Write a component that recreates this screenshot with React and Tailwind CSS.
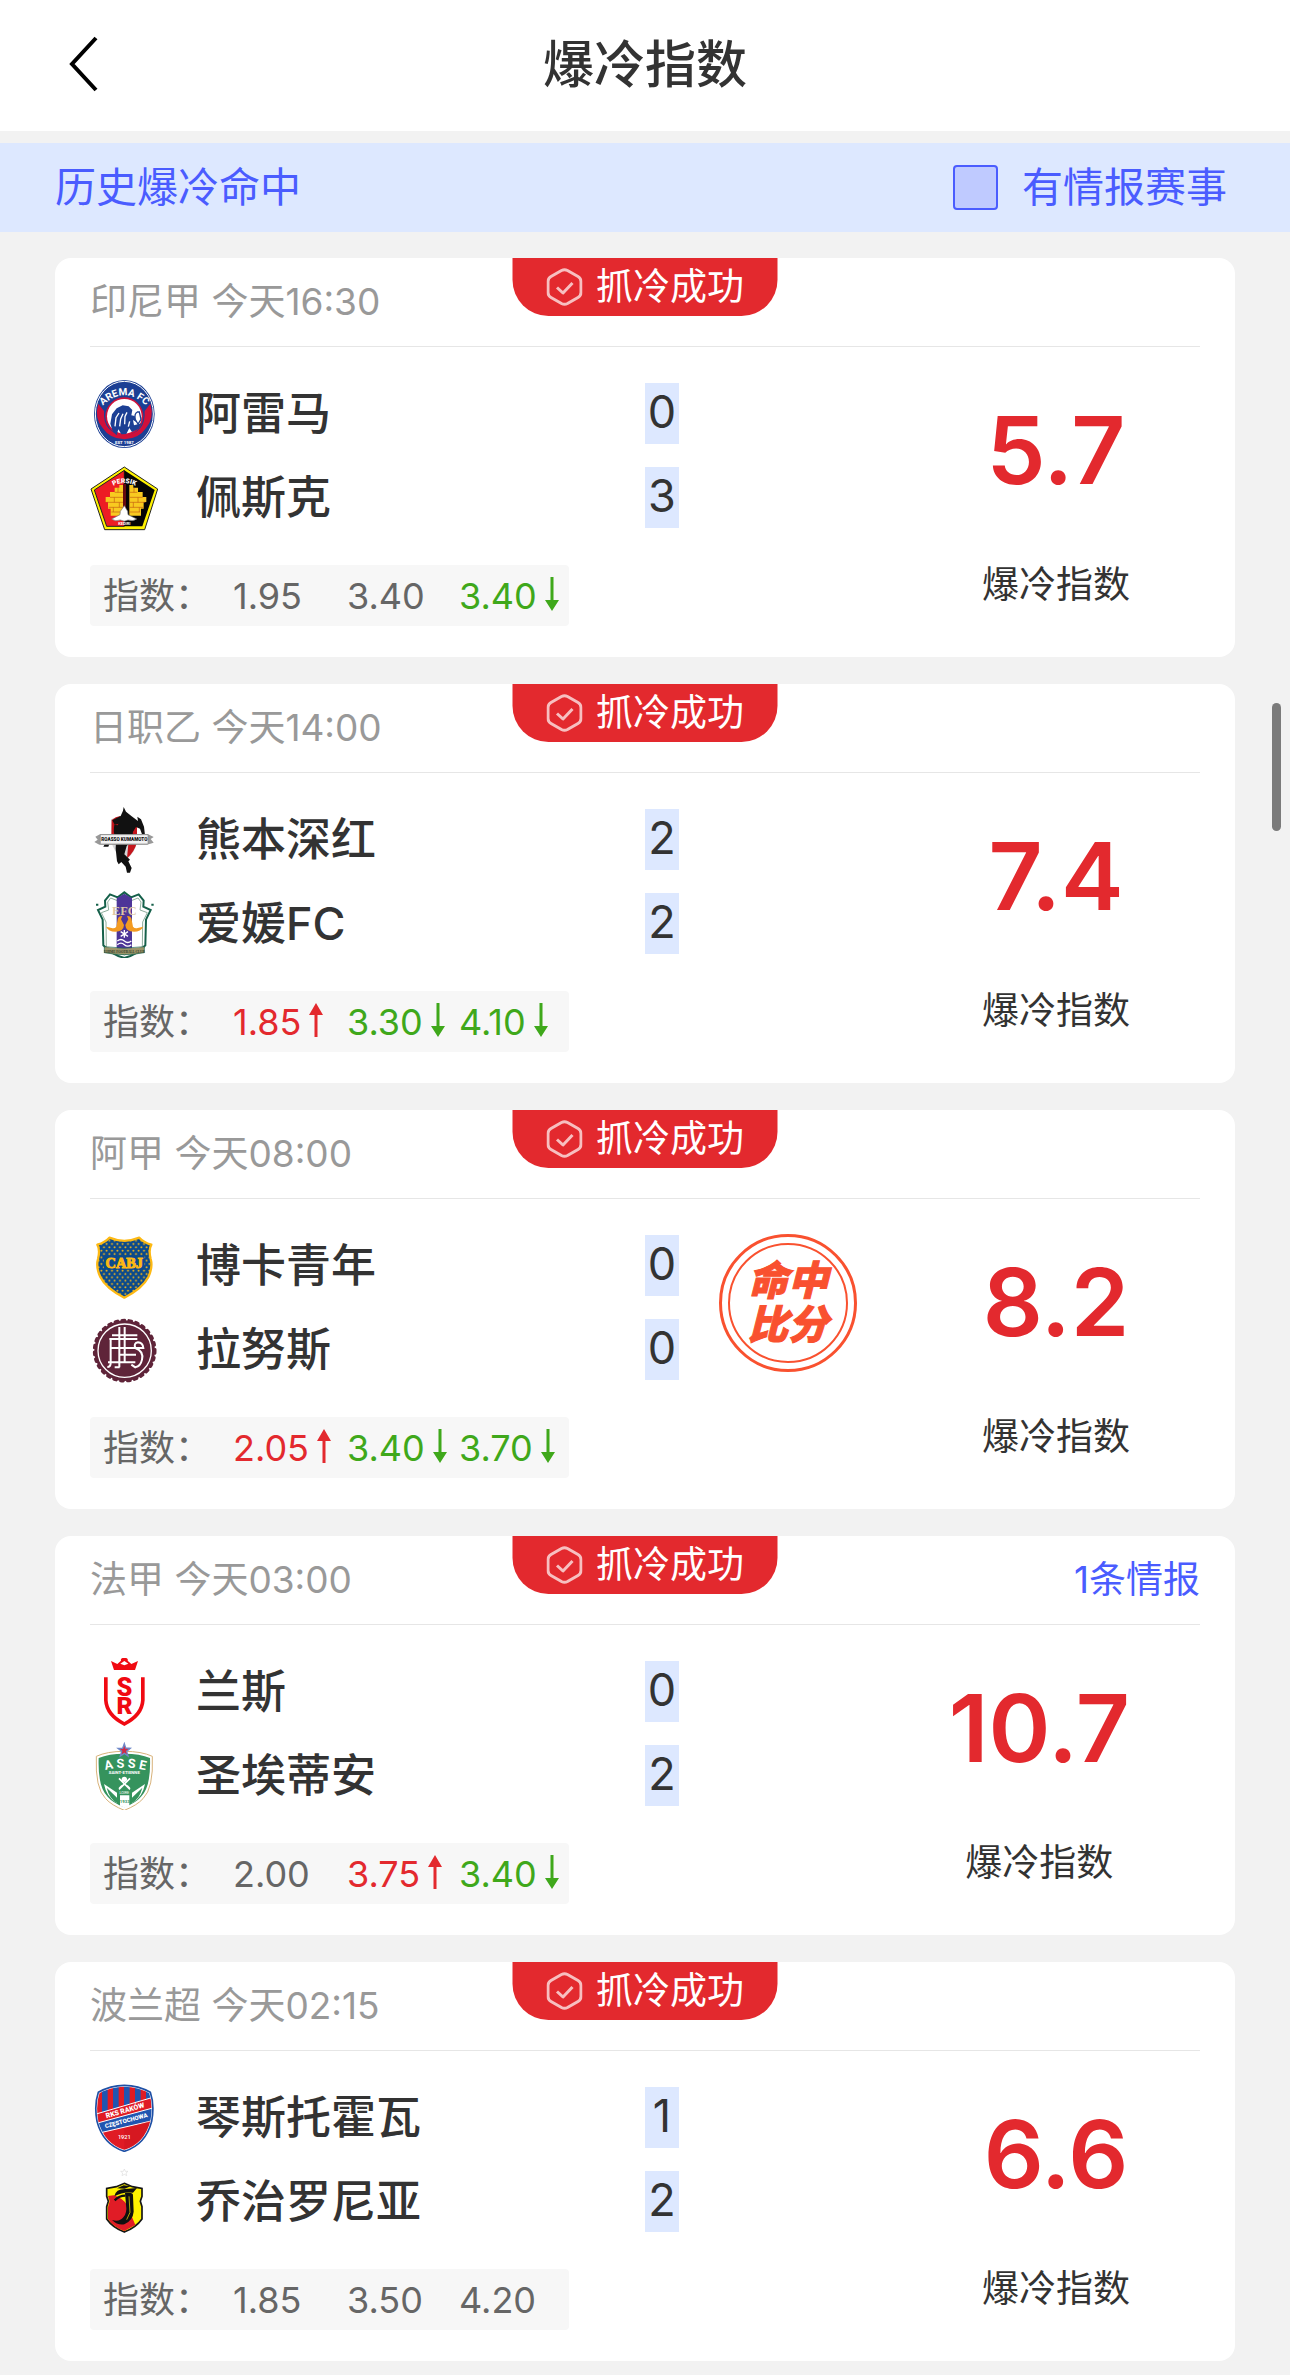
import React, { useState } from 'react';

const AremaLogo = () => (
  <svg viewBox="30 33 204 204" className="size-[68px]" aria-hidden="true">
    <ellipse cx="133" cy="135" rx="91" ry="102" fill="#1c3f94" />
    <ellipse cx="133" cy="135" rx="87" ry="98" fill="none" stroke="#fff" strokeWidth="3" />
    <path d="M55 104q-13 42 13 73q22 33 65 34q43-1 65-34q26-31 13-73l-17 22q4 67-61 72q-65-5-61-72z" fill="#d0103a" />
    <circle cx="133" cy="142" r="57" fill="#d0103a" />
    <circle cx="133" cy="142" r="52" fill="#fff" />
    <path d="M99 189l-8-25 5-28 14-18 18-9 18 3 11 11-3 16 10 2 5 18-10-6 3 16 22-6-8 16-20 10-8-12-9 18-15 1-9-15-5 18z" fill="#1c3f94" />
    <path d="M105 172l3-26 9-14M119 172l3-22 7-16M134 166l1-24 6-12M149 157l-4 16" fill="none" stroke="#fff" strokeWidth="4" />
    <path d="M172 129q-10 5-6 23l8 13 9-14-5-22z" fill="#fff" stroke="#1c3f94" strokeWidth="4" />
    <path id="arema-arc" d="M60 118Q133 40 206 118" fill="none" />
    <text fill="#fff" fontFamily="Roboto" fontWeight="700" fontSize="30">
      <textPath href="#arema-arc" startOffset="50%" textAnchor="middle">AREMA FC</textPath>
    </text>
    <text x="133" y="225" textAnchor="middle" fill="#fff" fontFamily="Roboto" fontWeight="700" fontSize="13">EST 1987</text>
  </svg>
);

const PersikLogo = () => (
  <svg viewBox="30 285 204 204" className="size-[68px]" aria-hidden="true">
    <path d="M133 294l100 66-39 122H74L33 360z" fill="#fff200" stroke="#222" strokeWidth="3" />
    <path d="M133 304v168H80L43 363z" fill="#ed1c24" stroke="#222" strokeWidth="3" />
    <path d="M133 304v168h54l37-109z" fill="#050505" />
    <path d="M118 348h12v92H92v-21h-8v-20h-7v-15h13v-15h14v-13h14zM148 348h12v8h14v13h14v15h11v15h-8v20h-8v21h-35z" fill="#f8ca20" />
    <path d="M104 370h26M90 385h40M78 400h52M86 415h44M94 429h36M148 370h24M148 385h40M148 400h48M148 415h42M148 429h32M114 356v14M103 385v15M118 400v15M100 415v14M162 356v14M174 385v15M160 400v15M178 415v14" stroke="#c65f12" strokeWidth="2" />
    <path d="M129 345h9v72h-9z" fill="#650b0f" />
    <path d="M133 410l10 17 1 10 26 13q-10 8-26 3-11 7-23 0-16 6-26-3l25-13 1-10z" fill="#fff" stroke="#777" strokeWidth="2" />
    <path id="persik-arc" d="M93 354q40-24 80 0" fill="none" />
    <text fill="#fff" fontFamily="Roboto" fontWeight="900" fontSize="20">
      <textPath href="#persik-arc" startOffset="50%" textAnchor="middle">PERSIK</textPath>
    </text>
    <text x="133" y="468" textAnchor="middle" fill="#fff" fontFamily="Roboto" fontWeight="700" fontSize="12">KEDIRI</text>
  </svg>
);

const KumamotoLogo = () => (
  <svg viewBox="30 35 204 204" className="size-[68px]" aria-hidden="true">
    <path d="M93 75l40-14 38 22v60q-5 34-38 58-34-30-39-60z" fill="#d5d7d9" />
    <path d="M95 77q12-11 26-12l-4 70H94zM158 100l13-10v54q-8 30-30 48l5-54z" fill="#c4161c" />
    <path d="M131 38l7 14 17 14 19 14-2-13 11 8 9 22 3 26-9-3-6-17-12-5-9 14-4 28-15 15-7 25 17 16-5 5 10 20-5 14h-9l-4-18-13-14-8 7-5-9-4-38 1-19-8-6-10 6-5 13H70l16-28 20-9 1-22 9-10-12 3-7-13 25-13 7-16z" fill="#111" />
    <path d="M107 91q-4 24 2 34M126 160l-6 22" stroke="#111" strokeWidth="8" fill="none" />
    <path d="M46 127l15-8h142l18 9-9 6 9 11-20 6H58l-15-8 10-7z" fill="#999" />
    <path d="M61 121h143v28H61z" fill="#f2f2f2" stroke="#888" strokeWidth="2" />
    <text x="133" y="141" textAnchor="middle" fill="#111" fontFamily="Roboto" fontWeight="900" fontSize="14">ROASSO KUMAMOTO</text>
  </svg>
);

const EhimeLogo = () => (
  <svg viewBox="30 287 204 204" className="size-[68px]" aria-hidden="true">
    <path d="M133 294l20 15 23-9 15 19-1 18 22 10-14 29-2 77-21 20-24 12-18 6-18-6-24-12-21-20-2-77-14-29 22-10-1-18 15-19 23 9z" fill="#fff" stroke="#15604a" strokeWidth="6" />
    <path d="M133 304l21 15 20-8 9 12-3 24 22 8-14 28-1 75-54 24-54-24-1-75-14-28 22-8-3-24 9-12 20 8z" fill="none" stroke="#8fae9d" strokeWidth="3" />
    <path d="M110 312l23-14 23 14v165H110z" fill="#4d3598" />
    <path d="M48 331h7M214 331h7" stroke="#15604a" strokeWidth="6" />
    <text x="133" y="361" textAnchor="middle" fill="#dcc7a4" fontFamily="Liberation Serif" fontWeight="700" fontSize="37">EFC</text>
    <path d="M127 365q-12-1-14 11l-4 21q-6 7-14 4l-17-4q8 15 28 15 25 0 26-20l-9-17zM141 365q12-1 14 11l4 21q6 7 14 4l17-4q-8 15-28 15-25 0-26-20l9-17z" fill="#f39b22" />
    <path d="M133 407v23M122 412l22 14M144 412l-22 14" stroke="#fff" strokeWidth="4" />
    <path d="M112 440q11-9 21 0t21 0M112 451q11-9 21 0t21 0" fill="none" stroke="#fff" strokeWidth="4" />
    <path d="M73 457q60 9 120 0v18q-60 12-120 0z" fill="#9b9569" stroke="#15604a" strokeWidth="2" />
    <text x="133" y="475" textAnchor="middle" fill="#32402c" fontFamily="Liberation Serif" fontWeight="700" fontSize="10">EHIME FOOTBALL CLUB</text>
  </svg>
);

const BocaLogo = () => (
  <svg viewBox="30 37 204 204" className="size-[68px]" aria-hidden="true">
    <defs>
      <pattern id="boca-dots" x="60" y="68" width="16" height="20" patternUnits="userSpaceOnUse">
        <circle cx="4" cy="5" r="2.8" fill="#fdb913" />
        <circle cx="12" cy="15" r="2.8" fill="#fdb913" />
      </pattern>
      <path id="boca-shield" d="M88 54q45 19 90 0 12 14 36 21-9 15-2 43 7 24-7 54-17 34-72 62-55-28-72-62-14-30-7-54 7-28-2-43 24-7 36-21z" />
    </defs>
    <use href="#boca-shield" fill="#0b4a8c" />
    <use href="#boca-shield" fill="url(#boca-dots)" stroke="#fdb913" strokeWidth="7" strokeLinejoin="round" />
    <path d="M72 108h121v40H72z" fill="#0b4a8c" />
    <text x="133" y="145" textAnchor="middle" fill="#fdb913" fontFamily="Liberation Serif" fontWeight="700" stroke="#fdb913" strokeWidth="3" fontSize="43">CABJ</text>
  </svg>
);

const LanusLogo = () => (
  <svg viewBox="30 289 204 204" className="size-[68px]" aria-hidden="true">
    <circle cx="134" cy="393" r="91" fill="#5f2439" />
    <circle cx="134" cy="393" r="91" fill="none" stroke="#5f2439" strokeWidth="9" strokeLinecap="round" strokeDasharray="8 13" />
    <circle cx="134" cy="393" r="80" fill="none" stroke="#fff" strokeWidth="4" />
    <path d="M118 322v121M134 322v106M96 347h76M88 358h84M92 360v70q0 12-10 12M92 385h98q-2-16-16-17-14 2-8 17 26 10 20 35-4 20-20 23l-12-8M118 405h50M84 428h82M104 443h15" fill="none" stroke="#fff" strokeWidth="6" />
  </svg>
);

const ReimsLogo = () => (
  <svg viewBox="30 39 204 204" className="size-[68px]" aria-hidden="true">
    <path d="M93 48l19 9 11-10q-3-8 10-9 13 1 10 9l11 10 20-9-9 27h-63z" fill="#f00a12" />
    <path d="M121 56l12-8 12 8-12 5z" fill="#fff" />
    <path d="M83 97H72v69q3 49 61 77 58-28 61-77V97h-11v69q-2 39-50 65-48-26-50-65z" fill="#f00a12" />
    <g fill="#f00a12" fontFamily="Roboto" fontWeight="900" textAnchor="middle">
      <text x="133" y="152" fontSize="76">S</text>
      <text x="134" y="206" fontSize="74">R</text>
    </g>
  </svg>
);

const AsseLogo = () => (
  <svg viewBox="30 291 204 204" className="size-[68px]" aria-hidden="true">
    <path d="M133 319q52 0 84 15 4 96-28 127-18 20-56 35-38-15-56-35-32-31-28-127 32-15 84-15z" fill="#fff" stroke="#d8b27a" strokeWidth="3" />
    <path d="M133 326q47 0 77 13 3 88-27 116-15 18-50 32-35-14-50-32-30-28-27-116 30-13 77-13z" fill="#35935d" />
    <path d="M72 417l39 26v31q-32-17-39-57zM195 417l-39 26v31q32-17 39-57zM120 451h28v31l-14 6-14-6z" fill="#fff" />
    <path d="M80 428l31 30v16q-23-13-31-46zM187 428l-31 30v16q23-13 31-46z" fill="#35935d" />
    <path d="M133 296l4 13 14 1-11 9 4 14-11-8-12 8 4-14-11-9h14z" fill="#d22b46" stroke="#6f88c8" strokeWidth="4" />
    <path id="asse-arc" d="M74 376q60-16 124 0" fill="none" />
    <text fill="#fff" fontFamily="Roboto" fontWeight="700" fontSize="38">
      <textPath href="#asse-arc" startOffset="50%" textAnchor="middle">A S S E</textPath>
    </text>
    <text x="133" y="388" textAnchor="middle" fill="#fff" fontFamily="Roboto" fontWeight="700" fontSize="13">SAINT-ETIENNE</text>
    <path d="M117 400l33 33M150 400l-33 33M118 430l8-8M149 430l-8-8" stroke="#fff" strokeWidth="5" />
    <circle cx="133" cy="403" r="8" fill="#fff" />
    <text x="133" y="447" textAnchor="middle" fill="#fff" fontFamily="Roboto" fontSize="11">LOIRE</text>
    <text x="134" y="474" textAnchor="middle" fill="#35935d" fontFamily="Roboto" fontWeight="700" fontSize="13">1933</text>
  </svg>
);

const RakowLogo = () => (
  <svg viewBox="30 41 204 204" className="size-[68px]" aria-hidden="true">
    <defs>
      <path id="rakow-shield" d="M133 45q42 0 78 21 13 38 4 87-18 70-82 90-64-20-82-90-9-49 4-87 36-21 78-21z" />
      <clipPath id="rakow-clip"><use href="#rakow-shield" /></clipPath>
    </defs>
    <use href="#rakow-shield" fill="#e01b24" />
    <g clipPath="url(#rakow-clip)">
      <path d="M66 44h17v90H66zM99 44h17v90H99zM132 44h17v90h-17zM165 44h17v90h-17zM198 44h24v90h-24z" fill="#2055b0" />
      <path d="M45 133L222 80v35L45 165z" fill="#e01b24" />
      <path d="M45 160L222 112v37L45 191z" fill="#2055b0" />
      <path d="M45 132L222 80M45 160L222 112M45 191L222 150" stroke="#fff" strokeWidth="3" />
      <path d="M133 175l85-25v95h-85z" fill="#c8141d" opacity=".4" />
    </g>
    <use href="#rakow-shield" fill="none" stroke="#fff" strokeWidth="8" />
    <use href="#rakow-shield" fill="none" stroke="#1d4fa5" strokeWidth="5" />
    <g fill="#fff" fontFamily="Roboto" fontWeight="900" textAnchor="middle">
      <text x="137" y="127" fontSize="21" transform="rotate(-16 137 127)">RKS RAKÓW</text>
      <text x="140" y="157" fontSize="18" transform="rotate(-15 140 157)">CZĘSTOCHOWA</text>
      <text x="133" y="205" fontSize="17" fontWeight="500">1921</text>
    </g>
  </svg>
);

const JagielloniaLogo = () => (
  <svg viewBox="30 293 204 204" className="size-[68px]" aria-hidden="true">
    <path d="M133 296l3 7h8l-6 5 2 8-7-4-7 4 2-8-6-5h8z" fill="#fff" stroke="#ddd" strokeWidth="2" />
    <path d="M133 339l24 10 29 5v24l-5 15 5 16v37q-18 26-53 39-35-13-53-39v-37l5-16-5-15v-24l29-5z" fill="#fff200" stroke="#151515" strokeWidth="5" />
    <path d="M84 377l17-2q27 8 40 29l25 60-33 18q-33-12-49-36v-36l5-17z" fill="#e01c26" />
    <path d="M103 378q4-22 32-22l36-3-12 14q-30-4-56 11zM111 354l20-9 21 3-18 7z" fill="#101010" />
    <path d="M135 368q26-4 24 8l2 48q-2 26-28 38-20 4-37-13 22 7 34-8 12-14 8-38z" fill="#101010" />
    <path d="M104 390q14-14 32-14" fill="none" stroke="#101010" strokeWidth="7" />
    <path d="M147 378l3 48-10 22" fill="none" stroke="#fff200" strokeWidth="2" />
  </svg>
);

const matches = [
  {
    league: '印尼甲',
    time: '今天16:30',
    teams: [
      { name: '阿雷马', score: 0, Logo: AremaLogo },
      { name: '佩斯克', score: 3, Logo: PersikLogo },
    ],
    odds: [{ value: '1.95' }, { value: '3.40' }, { value: '3.40', trend: 'down' }],
    index: '5.7',
  },
  {
    league: '日职乙',
    time: '今天14:00',
    teams: [
      { name: '熊本深红', score: 2, Logo: KumamotoLogo },
      { name: '爱媛FC', score: 2, Logo: EhimeLogo },
    ],
    odds: [{ value: '1.85', trend: 'up' }, { value: '3.30', trend: 'down' }, { value: '4.10', trend: 'down' }],
    index: '7.4',
  },
  {
    league: '阿甲',
    time: '今天08:00',
    teams: [
      { name: '博卡青年', score: 0, Logo: BocaLogo },
      { name: '拉努斯', score: 0, Logo: LanusLogo },
    ],
    odds: [{ value: '2.05', trend: 'up' }, { value: '3.40', trend: 'down' }, { value: '3.70', trend: 'down' }],
    index: '8.2',
    scoreHit: true,
  },
  {
    league: '法甲',
    time: '今天03:00',
    teams: [
      { name: '兰斯', score: 0, Logo: ReimsLogo },
      { name: '圣埃蒂安', score: 2, Logo: AsseLogo },
    ],
    odds: [{ value: '2.00' }, { value: '3.75', trend: 'up' }, { value: '3.40', trend: 'down' }],
    index: '10.7',
    intel: 1,
  },
  {
    league: '波兰超',
    time: '今天02:15',
    teams: [
      { name: '琴斯托霍瓦', score: 1, Logo: RakowLogo },
      { name: '乔治罗尼亚', score: 2, Logo: JagielloniaLogo },
    ],
    odds: [{ value: '1.85' }, { value: '3.50' }, { value: '4.20' }],
    index: '6.6',
  },
];

const trendColors = {
  up: 'text-[#e3292e]',
  down: 'text-[#3fa81b]',
};

const TrendArrow = ({ trend }) => (
  <svg viewBox="0 0 14 34" className="mb-1 h-[34px] w-[14px]" fill="currentColor" aria-hidden="true">
    {trend === 'up' ? (
      <path d="M7 0l7 12H8.500v22h-3V12H0z" />
    ) : (
      <path d="M7 34L0 23h5.500V0h3v23H14z" />
    )}
  </svg>
);

const SuccessBadge = () => (
  <div className="absolute top-0 left-1/2 flex h-[58px] w-[265px] -translate-x-1/2 items-center justify-center gap-[14px] rounded-b-[36px] bg-[#e3292e] text-white">
    <svg viewBox="0 0 36 38" className="h-[38px] w-9" fill="none" stroke="#f7bfc0" strokeWidth="3" strokeLinejoin="round" aria-hidden="true">
      <path d="M15 2.500q3-1.500 6 0l10.500 6q3 1.800 3 5v11q0 3.200-3 5l-10.500 6q-3 1.500-6 0l-10.500-6q-3-1.800-3-5v-11q0-3.200 3-5z" />
      <path d="M10.500 19.500l6 5.500 9.500-10" />
    </svg>
    <span className="text-[37px] leading-[58px]">抓冷成功</span>
  </div>
);

const HitStamp = () => (
  <div className="ml-10 mt-0.5 flex size-[138px] items-center justify-center rounded-full border-[3px] border-[#f9512f]">
    <p className="flex size-[120px] items-center justify-center rounded-full border-2 border-[#f9512f] text-center text-[40px] leading-[44px] font-black text-[#f9512f] italic [-webkit-text-stroke:1px_#f9512f]">
      命中<br />比分
    </p>
  </div>
);

const MatchCard = ({ match }) => (
  <article className="relative rounded-2xl bg-white px-[35px] pb-[31px]">
    <SuccessBadge />
    <header className="flex h-[89px] items-center justify-between border-b border-[#e6e6e6] text-[37px] text-[#999]">
      <span>{match.league} {match.time}</span>
      {match.intel && (
        <a href="#intel" className="text-[#4a5cff]">{match.intel}条情报</a>
      )}
    </header>

    <div className="grid grid-cols-2 pt-[33px]">
      <div>
        <div className="flex flex-col gap-4">
          {match.teams.map(({ name, Logo }) => (
            <div key={name} className="flex h-[68px] items-center gap-[38px]">
              <Logo />
              <span className="text-[45px] font-medium">{name}</span>
            </div>
          ))}
        </div>
        <div className="mt-[33px] grid h-[61px] w-[479px] grid-cols-[130px_114px_112px_1fr] items-center rounded bg-[#f7f7f7] pl-[13px] text-[36px] text-[#666]">
          <span>指数：</span>
          {match.odds.map(({ value, trend }, i) => (
            <span key={i} className={`flex items-center gap-2 ${trend ? trendColors[trend] : ''}`}>
              {value}
              {trend && <TrendArrow trend={trend} />}
            </span>
          ))}
        </div>
      </div>

      <div className="flex items-start">
        <div className="flex flex-col gap-[23px] pt-[3px]">
          {match.teams.map(({ name, score }) => (
            <span key={name} className="h-[61px] w-[34px] bg-[#dde8ff] text-center text-[45px] leading-[58px]">
              {score}
            </span>
          ))}
        </div>
        {match.scoreHit && <HitStamp />}
        <div className="mr-[70px] ml-auto pt-[22px] text-center">
          <p className="text-[94px] leading-[96px] font-semibold text-[#e3292e]">{match.index}</p>
          <p className="mt-[60px] text-[37px] leading-[54px]">爆冷指数</p>
        </div>
      </div>
    </div>
  </article>
);

const App = () => {
  const [onlyIntel, setOnlyIntel] = useState(false);
  const visible = onlyIntel ? matches.filter((m) => m.intel) : matches;

  return (
    <div className="min-h-screen bg-[#f2f2f2] pb-[14px] font-[Inter,'Noto_Sans_CJK_SC',sans-serif] text-[#333]">
      <header className="grid h-[131px] grid-cols-[1fr_auto_1fr] items-center bg-white px-[68px]">
        <button type="button" aria-label="返回" className="mb-1 w-8">
          <svg viewBox="0 0 32 56" className="h-14 w-8" fill="none" stroke="#000" strokeWidth="4" aria-hidden="true">
            <path d="M28 2L4 28l24 26" />
          </svg>
        </button>
        <h1 className="text-[51px] font-medium">爆冷指数</h1>
      </header>

      <div className="mt-3 flex h-[89px] items-center justify-between bg-[#dde8ff] px-[55px] text-[41px] text-[#4a5cff]">
        <a href="#history">历史爆冷命中</a>
        <label className="mr-2 flex items-center gap-6">
          <input
            type="checkbox"
            checked={onlyIntel}
            onChange={(e) => setOnlyIntel(e.target.checked)}
            className="size-[45px] appearance-none rounded-sm border-2 border-[#4a5cff] bg-[#bfcaff] checked:bg-[#4a5cff]"
          />
          有情报赛事
        </label>
      </div>

      <main className="mt-[26px] flex flex-col gap-[27px] px-[55px]">
        {visible.map((match) => (
          <MatchCard key={match.league} match={match} />
        ))}
      </main>

      {/* scroll position thumb */}
      <div className="fixed top-[703px] right-[9px] h-32 w-[9px] rounded-full bg-[#7b7b7b]" />
    </div>
  );
};

export default App;
